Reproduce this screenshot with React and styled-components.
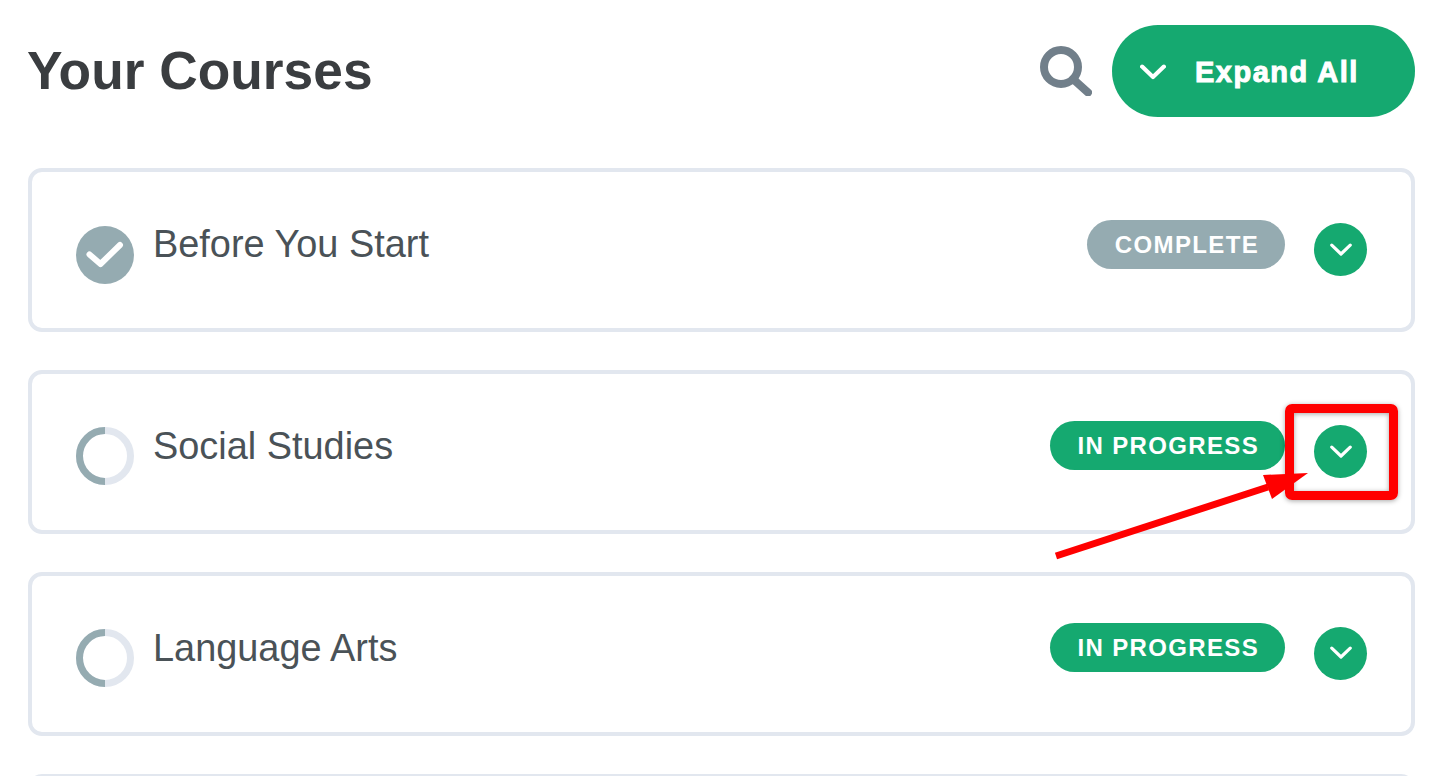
import React from "react";
import styled, { createGlobalStyle } from "styled-components";

const GlobalStyle = createGlobalStyle`
  html, body {
    margin: 0;
    height: 100%;
    overflow: hidden;
    background: #fff;
    font-family: "Liberation Sans", Arial, sans-serif;
  }
`;

const courses = [
  { name: "Before You Start", status: "COMPLETE" },
  { name: "Social Studies", status: "IN PROGRESS" },
  { name: "Language Arts", status: "IN PROGRESS" },
];

const Page = styled.div`
  position: relative;
  height: 776px;
  overflow: hidden;
  box-sizing: border-box;
  padding: 25px 24px 0 28px;
`;

const Header = styled.header`
  display: flex;
  align-items: center;
  height: 92px;
  margin-bottom: 51.4px;
`;

const Title = styled.h1`
  flex: 1;
  margin: -2px 0 0 -1px;
  font-size: 53.3px;
  font-weight: 700;
  color: #3a3d40;
`;

const SearchButton = styled.button`
  display: flex;
  padding: 0;
  margin: 0 20px 0 0;
  border: 0;
  background: none;
`;

const ExpandButton = styled.button`
  display: flex;
  align-items: center;
  gap: 29px;
  box-sizing: border-box;
  width: 303px;
  height: 92px;
  padding: 2px 0 0 28px;
  border: 0;
  border-radius: 46px;
  background: #15a970;
  color: #fff;
  font-family: inherit;
  font-size: 29px;
  font-weight: 700;
  letter-spacing: 1.5px;
  -webkit-text-stroke: 1px #fff;
`;

const List = styled.div`
  display: flex;
  flex-direction: column;
  gap: 38px;
`;

const Card = styled.section`
  display: flex;
  align-items: flex-start;
  box-sizing: border-box;
  height: 163.8px;
  padding: 47.2px 44px 0;
  border: 4px solid #e2e7ef;
  border-radius: 14px;
`;

const StatusIcon = styled.svg`
  flex: none;
  width: 58px;
  height: 58px;
  margin: 6px 19px 0 0;
`;

const CourseName = styled.h2`
  flex: 1;
  margin: 0.6px 0 0;
  font-size: 37.9px;
  font-weight: 400;
  line-height: 49px;
  color: #4a5257;
`;

const Pill = styled.span`
  box-sizing: border-box;
  height: 49px;
  padding: 0 26px 0 27.5px;
  border-radius: 25px;
  background: ${(p) => (p.$done ? "#95abb1" : "#15a970")};
  color: #fff;
  font-size: 24px;
  font-weight: 700;
  line-height: 49px;
  letter-spacing: 1.35px;
`;

const Toggle = styled.button`
  display: flex;
  align-items: center;
  justify-content: center;
  width: 53px;
  height: 53px;
  margin: 3.4px 0 0 29px;
  padding: 0;
  border: 0;
  border-radius: 50%;
  background: #15a970;
`;

const HighlightBox = styled.div`
  position: absolute;
  left: 1285px;
  top: 404px;
  box-sizing: border-box;
  width: 113px;
  height: 96px;
  border: 9px solid #ff0000;
  border-radius: 7px;
  box-shadow: 0 1px 5px rgba(0, 0, 0, 0.35), inset 0 1px 5px rgba(0, 0, 0, 0.35);
`;

const ArrowOverlay = styled.svg`
  position: absolute;
  left: 0;
  top: 0;
  width: 1439px;
  height: 776px;
  pointer-events: none;
`;

const Chevron = ({ width, stroke }) => (
  <svg width={width} height={width * 0.6} viewBox="0 0 25 15" fill="none">
    <path d="M2 2.5 L12.5 12.5 L23 2.5" stroke="#fff" strokeWidth={stroke} strokeLinecap="round" strokeLinejoin="round" />
  </svg>
);

const CourseStatus = ({ done }) => (
  <StatusIcon viewBox="0 0 58 58">
    {done ? (
      <>
        <circle cx="29" cy="29" r="29" fill="#95abb1" />
        <path d="M13.5 28.5 L24.5 38 L44 19" fill="none" stroke="#fff" strokeWidth="6" strokeLinecap="round" strokeLinejoin="round" />
      </>
    ) : (
      <>
        <circle cx="29" cy="29" r="25.5" fill="none" stroke="#e2e7ef" strokeWidth="7" />
        <path d="M29 3.5 A25.5 25.5 0 0 0 29 54.5" fill="none" stroke="#95abb1" strokeWidth="7" />
      </>
    )}
  </StatusIcon>
);

export default function App() {
  return (
    <Page>
      <GlobalStyle />
      <Header>
        <Title>Your Courses</Title>
        <SearchButton aria-label="Search">
          <svg width="52" height="50" viewBox="0 0 52 50" fill="none">
            <circle cx="21" cy="21" r="17" stroke="#717f8a" strokeWidth="8" />
            <path d="M33 33 L48 46.5" stroke="#717f8a" strokeWidth="8" strokeLinecap="round" />
          </svg>
        </SearchButton>
        <ExpandButton>
          <Chevron width={26} stroke={4} />
          Expand All
        </ExpandButton>
      </Header>
      <List>
        {courses.map((c) => (
          <Card key={c.name}>
            <CourseStatus done={c.status === "COMPLETE"} />
            <CourseName>{c.name}</CourseName>
            <Pill $done={c.status === "COMPLETE"}>{c.status}</Pill>
            <Toggle aria-label="Expand">
              <Chevron width={22} stroke={3.6} />
            </Toggle>
          </Card>
        ))}
        <Card />
      </List>
      <HighlightBox />
      <ArrowOverlay viewBox="0 0 1439 776">
        <path d="M1056 556 L1268 487" stroke="#ff0000" strokeWidth="7" />
        <path d="M1308 473 L1263 475 L1272 499 Z" fill="#ff0000" />
      </ArrowOverlay>
    </Page>
  );
}
